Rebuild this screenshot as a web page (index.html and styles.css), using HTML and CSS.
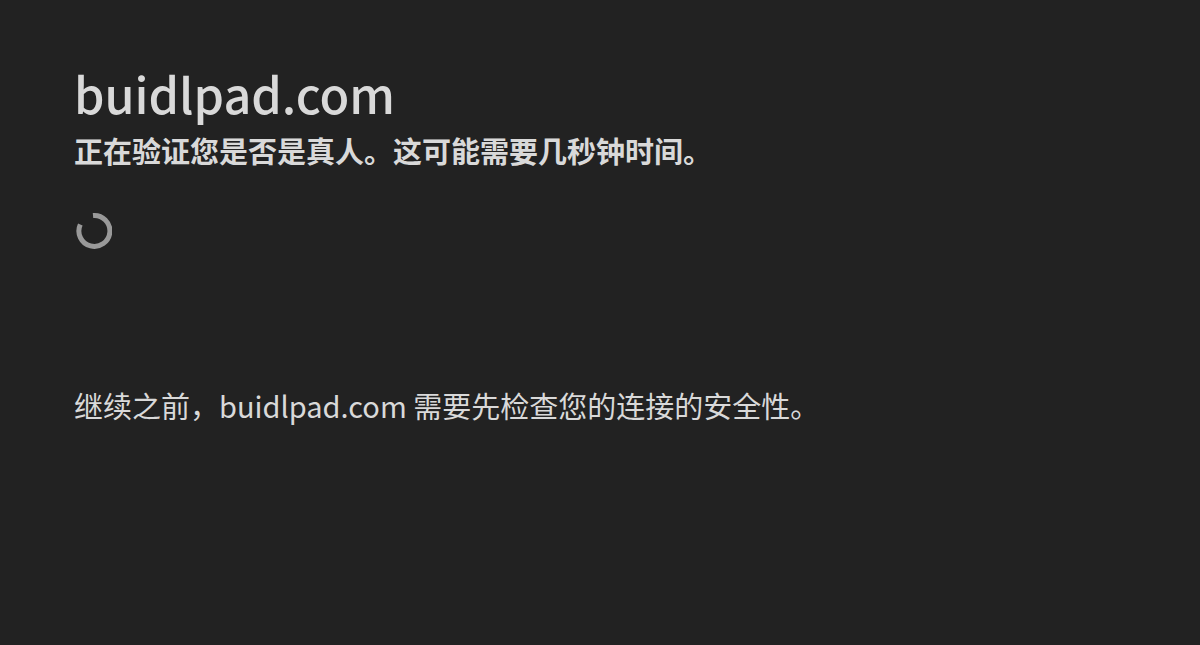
FILE: index.html
```html
<!DOCTYPE html>
<html lang="zh-CN">
<head>
    <meta charset="UTF-8">
    <meta name="viewport" content="width=device-width, initial-scale=1.0">
    <title>请稍候…</title>
    <link rel="stylesheet" href="styles.css">
</head>
<body>
    <div class="main-wrapper">
        <div class="main-content">
            <h1 class="zone-name-title">buidlpad.com</h1>
            <h2 class="challenge-title">正在验证您是否是真人。这可能需要几秒钟时间。</h2>
            <div class="spinner-wrap">
                <svg class="spinner" width="38" height="38" viewBox="0 0 38 38" aria-hidden="true">
                    <path d="M6.3 12.5 A15.5 15.5 0 1 0 19 3.5" fill="none" stroke="#999999" stroke-width="5"/>
                </svg>
            </div>
            <p class="core-msg">继续之前，buidlpad.com 需要先检查您的连接的安全性。</p>
        </div>
    </div>
</body>
</html>
```

FILE: styles.css
```css
:root {
    --bg-color: #222222;
    --text-color: #d9d9d9;
    --spinner-color: #999999;
}

* {
    box-sizing: border-box;
    margin: 0;
    padding: 0;
}

body {
    background-color: var(--bg-color);
    color: var(--text-color);
    font-family: "Noto Sans CJK SC", "Noto Sans", sans-serif;
    height: 100vh;
}

.main-wrapper {
    display: flex;
    flex-direction: column;
}

.main-content {
    padding: 63px 74px 0;
}

.zone-name-title {
    font-size: 48.5px;
    font-weight: 500;
    line-height: 60px;
}

.challenge-title {
    margin-top: 7px;
    font-size: 29px;
    font-weight: 700;
    line-height: 40px;
}

.spinner-wrap {
    margin-top: 42px;
    height: 38px;
}

.spinner {
    display: block;
}

.core-msg {
    margin-top: 135px;
    font-size: 29px;
    line-height: 40px;
}
```
